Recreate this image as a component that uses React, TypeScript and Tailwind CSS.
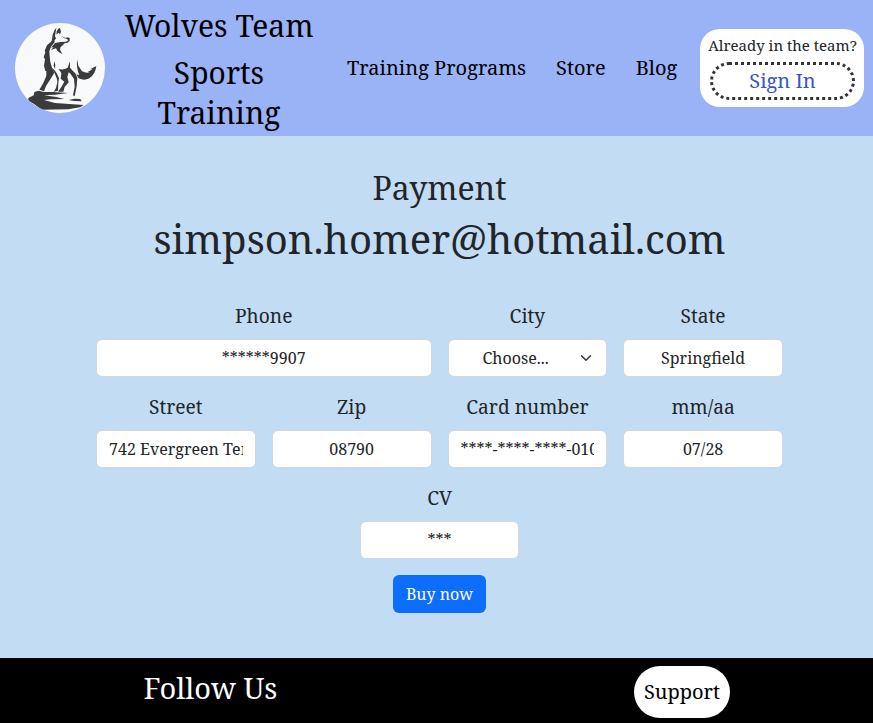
import type { ReactNode } from "react";

function WolfLogo() {
  return (
    <svg viewBox="30 23 270 270" className="size-[90px] shrink-0 rounded-full bg-[#f8f9fb]" fill="#3b3b3b">
      {/* ears and back of the head */}
      <path d="M143 84 L140 76 L143 58 L149 43 L154 38 L152 50 L150 62 L153 70 L146 76 Z" />
      <path d="M155 48 L160 40 L165 38 L168 50 L165 56 L160 52 L154 58 Z" />
      {/* nose, jaw and throat fur */}
      <path d="M169 61 L181 68 L187 66 L194 68 L194 76 L188 82 L180 83 L174 89 L167 95 L165 103 L172 117 L158 108 L153 99 L138 104 L146 95 L138 97 L150 83 L166 80 L183 79 L190 75 L185 70 L178 69 Z" />
      {/* neck, chest and front leg */}
      <path d="M147 68 L138 79 L126 90 L119 106 L121 111 L116 126 L120 131 L117 151 L121 168 L124 166 L124 181 L115 203 L103 223 L117 228 L123 212 L137 190 L148 172 L141 158 L136 140 L134 122 L133 108 L138 94 L149 80 Z" />
      <path d="M139 156 L149 174 L156 191 L157 201 L153 218 L146 229 L159 226 L160 202 L162 189 L156 175 L149 165 Z" />
      <path d="M148 138 L151 149 L150 162 L146 150 Z" />
      {/* belly and rear legs */}
      <path d="M161 161 Q176 165 188 157 L195 137 L195 157 L203 166 L211 174 L217 188 L215 213 L209 243 L204 240 L209 214 L207 191 L197 176 L191 171 L187 185 L191 201 L179 215 L175 229 L159 229 L169 215 L178 199 L167 190 L169 173 Z" />
      {/* tail */}
      <path d="M216 131 L220 151 L231 168 Q244 175 255 171 L248 170 L263 162 L255 162 L274 152 Q271 177 253 189 Q238 197 221 189 L214 177 L223 180 Q214 161 216 131 Z" />
      {/* rock */}
      <path d="M70 248 L86 240 L88 230 L101 226 L115 230 L145 230 L189 233 L150 238 L117 240 L154 245 L178 251 L137 252 L117 254 L150 263 L236 269 L225 276 L190 282 L110 283 L86 265 L70 256 Z" />
      <path d="M191 254 L209 250 L226 251 L230 258 L207 257 Z" />
    </svg>
  );
}

function Field({ label, className, children }: { label: string; className: string; children: ReactNode }) {
  return (
    <label className={`flex flex-col gap-2 ${className}`}>
      <span className="text-[19.2px] leading-[28.8px]">{label}</span>
      {children}
    </label>
  );
}

const control = "block h-[38px] w-full rounded-[6px] border border-[#d3d6da] bg-white text-center text-base leading-6 text-[#212529] outline-none";

function Input({ value }: { value: string }) {
  return <input defaultValue={value} className={`${control} px-3 py-1.5`} />;
}

export default function App() {
  return (
    <div className="flex h-[723px] w-[873px] flex-col overflow-hidden bg-[#c2dcf3] font-['Noto_Serif',serif] text-[#212529]">
      <header className="flex h-[136px] shrink-0 items-center bg-[#9ab3f7] pl-[15px] text-black">
        <WolfLogo />
        <div className="ml-[13px] flex w-[202px] flex-col gap-[7px] pt-[3px] text-center text-[30px] leading-10">
          <p>Wolves Team</p>
          <p>Sports<br />Training</p>
        </div>
        <nav className="ml-[27px] flex gap-[30px] text-xl leading-[30px] whitespace-nowrap">
          <a>Training Programs</a>
          <a>Store</a>
          <a>Blog</a>
        </nav>
        <div className="mr-[9px] ml-auto flex h-[78px] w-[164px] flex-col items-center rounded-[20px] bg-white pt-[5px] pl-px">
          <p className="text-[15px] leading-[23px] whitespace-nowrap text-[#212529]">Already in the team?</p>
          <button className="mt-[5px] h-[38px] w-[145px] rounded-[20px] border-[3px] border-dotted border-[#333333] text-xl leading-[30px] text-[#3a55c8]">Sign In</button>
        </div>
      </header>

      <main className="flex h-[522px] shrink-0 flex-col items-center pt-[33px] pl-[6px] text-center">
        <h2 className="text-[32px] leading-[38.4px]">Payment</h2>
        <h1 className="mt-2 text-[40px] leading-[48px]">simpson.homer@hotmail.com</h1>
        <form className="mt-[39px] flex w-[703px] flex-col items-center gap-4">
          <div className="flex w-full flex-wrap justify-center gap-y-4">
            <Field label="Phone" className="w-1/2 px-2"><Input value="******9907" /></Field>
            <Field label="City" className="w-1/4 px-2">
              <span className={`${control} flex items-center justify-between pr-3.5 pl-[34px]`}>
                <span>Choose...</span>
                <svg viewBox="0 0 16 16" className="size-3" fill="none" stroke="#343a40" strokeWidth="2" strokeLinecap="round" strokeLinejoin="round">
                  <path d="m2 5 6 6 6-6" />
                </svg>
              </span>
            </Field>
            <Field label="State" className="w-1/4 px-2"><Input value="Springfield" /></Field>
            <Field label="Street" className="w-1/4 px-2"><Input value="742 Evergreen Terrace" /></Field>
            <Field label="Zip" className="w-1/4 px-2"><Input value="08790" /></Field>
            <Field label="Card number" className="w-1/4 px-2"><Input value="****-****-****-0104" /></Field>
            <Field label="mm/aa" className="w-1/4 px-2"><Input value="07/28" /></Field>
            <Field label="CV" className="w-1/4 px-2"><Input value="***" /></Field>
          </div>
          <button type="button" className="h-[38px] w-[93px] rounded-[6px] bg-[#0d6efd] text-base leading-6 text-white">Buy now</button>
        </form>
      </main>

      <footer className="flex h-[65px] shrink-0 items-start bg-black text-white">
        <p className="ml-[143.5px] pt-[8px] text-[29px] leading-[43px]">Follow Us</p>
        <button className="mt-2 mr-[143px] ml-auto h-[52px] w-24 rounded-[26px] bg-white text-xl text-black">Support</button>
      </footer>
    </div>
  );
}
